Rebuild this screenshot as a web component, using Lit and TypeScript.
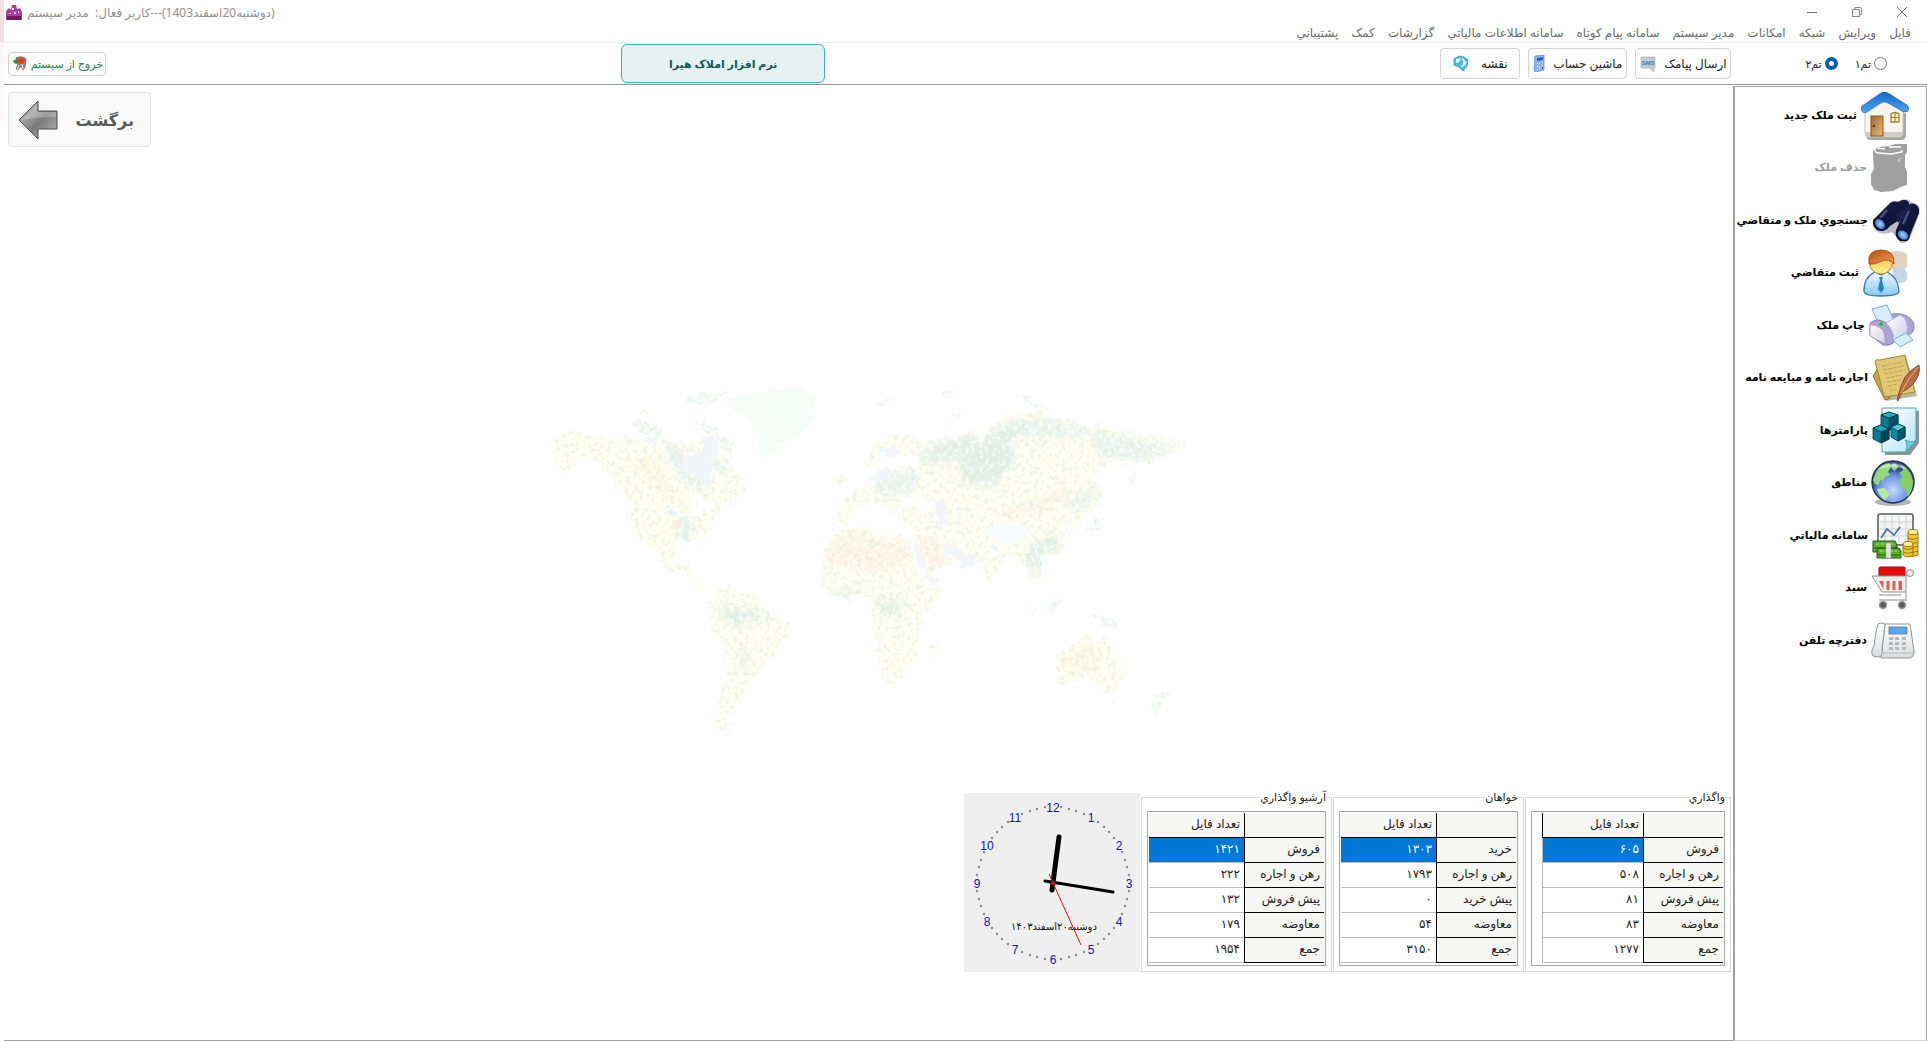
import { LitElement, html, svg, css } from "lit";
import { customElement, property, state } from "lit/decorators.js";
import { classMap } from "lit/directives/class-map.js";

const art = (w: number, h: number, body: unknown) =>
  html`<svg width=${w} height=${h} viewBox="0 0 ${w} ${h}" aria-hidden="true">${body}</svg>`;

const house = art(48, 48, svg`
  <defs>
    <linearGradient id="roof" x1="0" y1="0" x2="0" y2="1"><stop offset="0" stop-color="#1668c8"/><stop offset="1" stop-color="#4aa6f4"/></linearGradient>
    <linearGradient id="door" x1="0" y1="0" x2="1" y2="1"><stop offset="0" stop-color="#a5682c"/><stop offset="1" stop-color="#e6b878"/></linearGradient>
  </defs>
  <path d="M6 24 L24 8 L45 22 V43 Q45 48 40 48 H10 Q5 48 5 43Z" fill="#8f8f8c" opacity=".8"/>
  <path d="M4 20 L24 5 L42 20 V41 Q42 45 39 45 H7 Q4 45 4 41Z" fill="#f6f5ef" stroke="#c4c2ba"/>
  <path d="M4 40 H42 V42 Q41 45 38 45 H7 Q4 45 4 41Z" fill="#cfcdc4"/>
  <path d="M1 14 L20 1 Q23 -1 27 1 L46 13 Q49 16 47 19 Q45 21 41 19 L27 11 Q23 9 20 11 L6 20 Q2 22 1 19 Q-1 17 1 14Z" fill="url(#roof)" stroke="#1b5ca8" stroke-width=".6"/>
  <rect x="10" y="24" width="12" height="20" fill="url(#door)" stroke="#8a5520"/>
  <circle cx="13" cy="34" r="1.300" fill="#5e3a12"/>
  <path d="M30 22 Q34 19 38 22 V30 H30Z" fill="#fff6d2" stroke="#ae8233" stroke-width="1.400"/>
  <path d="M34 21V30M30 25.500H38" stroke="#ae8233" stroke-width="1.200"/>`);

const bin = art(38, 48, svg`
  <path d="M2 6 L8 3 L18 2 L24 0 L36 0 V8 L34 11 L34 23 L36 28 V41 L30 43 L22 47 L10 48 L3 46 L0 40 V30 L3 25 L2 14Z" fill="#a0a0a0"/>
  <path d="M4 4 Q3 9 8 9 L20 10 L31 8 V6 M6 4 L14 5 M18 3H30" fill="none" stroke="#fff" stroke-width="1.400"/>
  <path d="M28 15v3M30 14v1" stroke="#fff"/>`);

const binoculars = art(48, 44, svg`
  <defs><linearGradient id="bn" x1="0" y1="0" x2="1" y2="1"><stop offset="0" stop-color="#3b4584"/><stop offset=".35" stop-color="#141a45"/><stop offset="1" stop-color="#080b26"/></linearGradient>
  <radialGradient id="lens"><stop offset="0" stop-color="#a9dcff"/><stop offset="1" stop-color="#2468cf"/></radialGradient></defs>
  <path d="M4 24 L20 5 Q24 1 29 3 L32 1 Q37 -1 39 3 L46 6 Q49 10 47 16 L39 37 Q35 45 29 44 L20 33 Q12 37 4 32Z" fill="#9c9ca4" opacity=".7"/>
  <path d="M1 21 L18 4 Q21 1 26 3 L30 1 Q35 0 37 4 L38 14 L18 27 Q13 34 5 31 Q0 28 1 21Z" fill="url(#bn)"/>
  <path d="M24 31 L34 9 Q38 3 43 5 Q48 8 47 14 L38 36 Q34 43 28 42 Q22 38 24 31Z" fill="url(#bn)"/>
  <path d="M24 15 L36 8 L36 16 L26 24Z" fill="#1a2152"/>
  <path d="M15 11L8 19M37 12L31 25" stroke="#66719f" stroke-width="2" opacity=".7"/>
  <ellipse cx="8" cy="25" rx="5" ry="6.500" transform="rotate(-42 8 25)" fill="url(#lens)" stroke="#0b0e2a" stroke-width="1.500"/>
  <ellipse cx="31" cy="36" rx="5" ry="6.500" transform="rotate(-52 31 36)" fill="url(#lens)" stroke="#0b0e2a" stroke-width="1.500"/>`);

const person = art(46, 48, svg`
  <defs><linearGradient id="suit" x1="0" y1="0" x2="0" y2="1"><stop offset="0" stop-color="#f2fbff"/><stop offset="1" stop-color="#86c8f0"/></linearGradient>
  <linearGradient id="hair" x1="0" y1="0" x2="1" y2="1"><stop offset="0" stop-color="#b84a0c"/><stop offset="1" stop-color="#f2a05a"/></linearGradient>
  <linearGradient id="face" x1="0" y1="0" x2="0" y2="1"><stop offset="0" stop-color="#ffbe3c"/><stop offset="1" stop-color="#ffef9c"/></linearGradient></defs>
  <path d="M26 3 Q38 0 44 5 V18 Q40 19 44 24 V30 Q40 36 32 33Z" fill="#e2d2c0"/>
  <path d="M30 20 Q40 16 44 24 V30 Q40 36 32 33Z" fill="#c3d6e4"/>
  <path d="M1 42 Q1 28 12 23 L18 26 L24 23 Q35 28 36 42 Q36 47 18 47 Q1 47 1 42Z" fill="url(#suit)" stroke="#3577ac" stroke-width="1.300"/>
  <path d="M16 28 L20 28 L19 31 L21 40 L18 44 L15 40 L17 31Z" fill="#2d82c4"/>
  <ellipse cx="18" cy="14" rx="11.500" ry="11" fill="url(#face)" stroke="#d07a1c"/>
  <path d="M6 15 Q4 1 18 1 Q32 1 31 15 Q25 9 19 12 Q12 16 6 15Z" fill="url(#hair)" stroke="#a0430c" stroke-width=".8"/>`);

const printer = art(46, 44, svg`
  <defs><linearGradient id="pr" x1="0" y1="0" x2="1" y2="1"><stop offset="0" stop-color="#fff"/><stop offset="1" stop-color="#cfcdea"/></linearGradient></defs>
  <path d="M18 12 Q28 7 38 12 Q46 17 45 24 Q44 31 37 31 L20 26Z" fill="#a9a4d2" stroke="#8d88bd"/>
  <path d="M3 5 L18 1 L25 17 L10 21Z" fill="#d9edff" stroke="#74aee6"/>
  <path d="M1 19 Q8 13 17 19 Q25 25 25 38 Q21 42 14 41 L1 31Z" fill="#aaa5d0" stroke="#837db4"/>
  <path d="M1 21 Q6 20 13 25 Q17 30 16 40 L1 32Z" fill="url(#pr)" stroke="#9a95c5" stroke-width=".8"/>
  <path d="M17 19 L31 11 Q40 15 38 30 L25 36 Q24 25 17 19Z" fill="url(#pr)" stroke="#bab7dc"/>
  <path d="M24 36 L37 29 L44 36 L31 43Z" fill="#d6efff" stroke="#6fb4e8"/>
  <circle cx="12" cy="20" r="2" fill="#35b34a"/>`);

const scroll = art(48, 48, svg`
  <path d="M3 8 L34 2 L45 42 L14 47 Z" fill="#8c8458" opacity=".6"/>
  <path d="M1 22 L10 8 L18 44 L13 46Z" fill="#c9a73c" stroke="#8d7426"/>
  <path d="M3 7 Q4 5 8 6 L33 1 Q34 10 38 20 L43 38 Q28 41 12 43 Q8 26 3 7Z" fill="#dfc773" stroke="#a48838"/>
  <path d="M10 12L31 8M11 16L32 12M12 20L33 16M14 24L30 21M15 28L29 26M16 32L26 30M17 36H24" stroke="#c0a24c" stroke-width="1" stroke-dasharray="4 1"/>
  <path d="M47 11 Q49 20 42 29 Q36 36 30 38 L26 47 L25 46 Q28 32 33 23 Q39 15 47 11Z" fill="#b76a45" stroke="#7c412a" stroke-width=".8"/>
  <path d="M46 13 Q36 24 29 39" fill="none" stroke="#e6b295"/>`);

const cubes = art(48, 48, svg`
  <defs><linearGradient id="pg" x1="0" y1="0" x2="1" y2="1"><stop offset="0" stop-color="#fff"/><stop offset="1" stop-color="#b4e6f6"/></linearGradient></defs>
  <path d="M13 4 H47 V36 L38 48 H13Z" fill="#8d9498"/>
  <path d="M10 1 H44 V34 L34 45 H10Z" fill="url(#pg)" stroke="#4aa0bc"/>
  <path d="M44 34 L34 45 Q36 36 33 33 Q38 36 44 34Z" fill="#6cc9e4" stroke="#2d93b4" stroke-width=".7"/>
  <g stroke="#04363f" stroke-width=".8">
    <path d="M9 8 L17 5 L26 8 V19 L17 23 L9 19Z" fill="#067c94"/><path d="M9 8 L17 5 L26 8 L17 11Z" fill="#24aec8"/><path d="M17 11V23L26 19V8Z" fill="#045468"/>
    <path d="M1 21 L9 18 L17 22 V32 L9 36 L1 32Z" fill="#067c94"/><path d="M1 21 L9 18 L17 22 L9 25Z" fill="#1fa4bf"/><path d="M9 25V36L17 32V22Z" fill="#034557"/>
    <path d="M19 20 L26 17 L33 20 V30 L26 34 L19 30Z" fill="#0890aa"/><path d="M19 20 L26 17 L33 20 L26 24Z" fill="#4ccde2"/><path d="M26 24V34L33 30V20Z" fill="#045a6e"/>
  </g>`);

const globe = art(44, 46, svg`
  <defs><radialGradient id="sea" cx=".5" cy=".7"><stop offset="0" stop-color="#c6dcff"/><stop offset=".7" stop-color="#6f93e4"/><stop offset="1" stop-color="#3a4a9c"/></radialGradient></defs>
  <ellipse cx="22" cy="42" rx="18" ry="4" fill="#b4b4b8"/>
  <circle cx="22" cy="22" r="21" fill="url(#sea)" stroke="#22344e" stroke-width="1.400"/>
  <path d="M5 12 Q9 4 18 3 L20 7 L17 12 L19 15 L14 17 L12 21 L9 20 L8 25 L4 24 L2 20Z" fill="#93d87c"/>
  <path d="M20 5 L24 3 L27 7 L24 11 L21 9Z" fill="#93d87c"/>
  <path d="M29 4 Q40 9 42 21 Q42 30 37 37 L35 30 L30 27 L28 20 L31 17 L28 13 L32 10Z" fill="#84d064"/>
  <path d="M6 29 L13 28 L19 34 L14 40 Q8 36 6 29Z" fill="#b6eaa2"/>
  <path d="M8 9 Q22 -2 36 9 Q22 5 8 9Z" fill="#fff" opacity=".5"/>`);

const finance = art(48, 46, svg`
  <rect x="6" y="1" width="35" height="31" rx="2" fill="#f5f5f5" stroke="#55585a" stroke-width="1.500"/>
  <path d="M13 3V30M20 3V30M27 3V30M34 3V30M8 9H39M8 16H39M8 23H39" stroke="#d0d3d4"/>
  <path d="M9 25 L15 16 L22 22 L28 14" fill="none" stroke="#3c6da8" stroke-width="1.600"/>
  <g fill="#59b02c" stroke="#1f5c0e"><path d="M1 28 H23 L25 32 V39 H1Z"/><path d="M5 35 H27 L29 38 V45 H5Z"/></g>
  <path d="M1 35H25M5 42H28" stroke="#1f5c0e"/>
  <path d="M4 31H21M8 38H25" stroke="#b8e68c" stroke-dasharray="3 2"/>
  <rect x="14" y="30" width="5" height="15" fill="#e4e4dc" stroke="#9a9a92" stroke-width=".6"/>
  <g fill="#edc437" stroke="#93700c" stroke-width=".9">
    <path d="M36 20V42Q41 45 46 42V20Z"/><ellipse cx="41" cy="19" rx="5" ry="2.500" fill="#fff0a0"/>
    <path d="M36 25Q41 28 46 25M36 29Q41 32 46 29M36 33Q41 36 46 33M36 38Q41 41 46 38" fill="none"/>
    <path d="M31 31V42Q36 46 41 42V31Z"/><ellipse cx="36" cy="31" rx="5" ry="2.500" fill="#fff0a0"/>
    <path d="M31 35Q36 38 41 35M31 39Q36 42 41 39" fill="none"/>
  </g>`);

const cart = art(44, 44, svg`
  <rect x="8" y="1" width="26" height="12" rx="1" fill="#e80c0c" stroke="#a80808"/>
  <path d="M1 10 H35 V26 H11 Z" fill="#ececec" stroke="#8f8f8f"/>
  <path d="M8 15 H31 V24 H13Z" fill="#e2604a"/>
  <path d="M14 14V25M20 14V25M26 14V25" stroke="#f4f4f4" stroke-width="3"/>
  <path d="M35 10 L37 8 L40 7" fill="none" stroke="#a2a2a2" stroke-width="2"/>
  <path d="M35 10V34H8M8 29H30" fill="none" stroke="#c4c4c4" stroke-width="2"/>
  <circle cx="39" cy="7" r="3.500" fill="#e9e9e9" stroke="#909090"/>
  <circle cx="12" cy="39" r="3.500" fill="#5a5a5a" stroke="#9b9b9b" stroke-width="1.500"/>
  <circle cx="31" cy="39" r="3.500" fill="#5a5a5a" stroke="#9b9b9b" stroke-width="1.500"/>`);

const phone = art(44, 38, svg`
  <defs><linearGradient id="ph" x1="0" y1="0" x2="0" y2="1"><stop offset="0" stop-color="#fff"/><stop offset="1" stop-color="#d9dcde"/></linearGradient></defs>
  <path d="M14 2 H39 L43 29 Q43 36 38 36 H10Z" fill="url(#ph)" stroke="#8f9498"/>
  <path d="M7 2 Q9 0 14 2 Q13 12 11 27 Q12 35 8 35 L2 34 Q-1 30 3 24 Q4 12 7 2Z" fill="url(#ph)" stroke="#8f9498"/>
  <path d="M11 31 H42" stroke="#b9bdc0"/>
  <rect x="18" y="5" width="18" height="7" fill="#5aa6ec" stroke="#5a7a9c" stroke-width=".8"/>
  <g fill="#b3b8bc"><path d="M18 15h4v3h-4zM24 15h4v3h-4zM31 15h4v3h-4zM18 20h4v3h-4zM24 20h4v3h-4zM31 20h4v3h-4zM18 25h4v3h-4zM24 25h4v3h-4zM31 25h4v3h-4z"/></g>`);

const appIcon = art(16, 15, svg`
  <path d="M0 6 L3 3 L5 5 L6 0 H10 L11 4 L14 3 L16 7 V15 H0Z" fill="#b03aa4"/>
  <path d="M1 11H15V15H1Z" fill="#74186c"/>
  <path d="M6 3h2v2H6zM8 7h2v2H8zM3 8h2v1H3zM12 6h1v2h-1z" fill="#ffe9c0"/>`);

const exitIcon = art(14, 15, svg`
  <path d="M3 2 Q9 -1 13 3 L12 11 L10 14 L8 10 L5 14 L3 13 L5 8Z" fill="#8d8d90" stroke="#5c5c60" stroke-width=".7"/>
  <ellipse cx="8" cy="5" rx="4" ry="3" fill="#e2401c"/>
  <path d="M0 5 Q3 2 5 4 L4 8 Q1 8 0 5Z" fill="#2c8a3a"/>
  <path d="M4 14L6 9M10 13L9 8" stroke="#f2f2f2"/>`);

const backIcon = art(40, 40, svg`
  <defs><linearGradient id="ar" x1="0" y1="0" x2="1" y2="1"><stop offset="0" stop-color="#d4d4d4"/><stop offset=".55" stop-color="#7a7a7a"/><stop offset="1" stop-color="#bdbdbd"/></linearGradient></defs>
  <path d="M1 20 L20 1 V11 H39 V29 H20 V39Z" fill="url(#ar)" stroke="#4a4a4a"/>
  <path d="M4 20 L19 5 V12 H38 V17 Q20 17 4 20Z" fill="#fff" opacity=".25"/>`);

const smsIcon = art(16, 16, svg`
  <path d="M1 1H15V12H13L14 16L9 12H1Z" fill="#c3c8cb" stroke="#a7adb1" stroke-width=".6"/>
  <text x="8" y="9" text-anchor="middle" direction="ltr" font-family="Liberation Sans, sans-serif" font-weight="700" font-size="6" fill="#2a86b8">SMS</text>`);

const calcIcon = art(12, 17, svg`
  <path d="M2 1 L11 0 V15 L3 17 L1 16Z" fill="#8db4ee" stroke="#5a86cd" stroke-width=".7"/>
  <path d="M4 3L10 2V5L4 6Z" fill="#2f62b8"/>
  <path d="M4 8h1v1H4zM6 8h1v1H6zM9 7h1v1H9zM4 11h1v1H4zM6 11h1v1H6zM9 10h1v1H9zM4 14h1v1H4zM6 13h1v1H6z" fill="#fff"/>
  <path d="M9 12h1v2H9z" fill="#2f62b8"/>`);

const mapIcon = art(16, 17, svg`
  <path d="M1 4 L6 1 L11 2 L15 5 L14 11 L10 16 L6 12 L1 10Z" fill="#49bfe2" stroke="#2587ac" stroke-width=".7"/>
  <path d="M3 4 L8 3 L6 7 L3 8Z" fill="#e8faff"/>
  <path d="M9 4 Q12 5 11 9 L9 12" fill="none" stroke="#fff" stroke-width="1.600"/>
  <path d="M12 6 L14 7 L12 12Z" fill="#bcebf8"/>`);

const worldMap = html`<svg class="map" viewBox="546 387 640 354" aria-hidden="true">
  <defs>
    <filter id="coast" x="-5%" y="-5%" width="110%" height="110%" color-interpolation-filters="sRGB">
      <feTurbulence type="fractalNoise" baseFrequency=".12" numOctaves="4" seed="4" result="n"/>
      <feDisplacementMap in="SourceGraphic" in2="n" scale="14" xChannelSelector="R" yChannelSelector="G" result="d"/>
      <feTurbulence type="fractalNoise" baseFrequency=".22" numOctaves="3" seed="9" result="m"/>
      <feColorMatrix in="m" type="matrix" values="0 0 0 0 .84  0 0 0 0 .92  0 0 0 0 .86  0 6 0 0 -3" result="s"/>
      <feComposite in="s" in2="d" operator="in" result="t"/>
      <feComponentTransfer in="t" result="u"><feFuncA type="linear" slope=".45"/></feComponentTransfer>
      <feColorMatrix in="m" type="matrix" values="0 0 0 0 1  0 0 0 0 1  0 0 0 0 1  7 0 0 0 -3.800" result="w"/>
      <feComponentTransfer in="w" result="x"><feFuncA type="linear" slope=".7"/></feComponentTransfer>
      <feMerge><feMergeNode in="d"/><feMergeNode in="u"/><feMergeNode in="x"/></feMerge>
    </filter>
    <filter id="edge" x="-5%" y="-5%" width="110%" height="110%" color-interpolation-filters="sRGB">
      <feTurbulence type="fractalNoise" baseFrequency=".12" numOctaves="4" seed="4" result="n"/>
      <feDisplacementMap in="SourceGraphic" in2="n" scale="10" xChannelSelector="R" yChannelSelector="G"/>
    </filter>
    <filter id="melt" x="-10%" y="-10%" width="120%" height="120%" color-interpolation-filters="sRGB"><feGaussianBlur stdDeviation="9"/></filter>
  </defs>
  <g filter="url(#coast)">
    <g transform="translate(530 370) scale(.3333)" fill="#fffdee">
      <path d="M60 205 L110 188 L220 200 L300 205 L380 215 L450 225 L500 205 L550 205 L545 260 L590 285 L620 320 L655 355 L600 400 L560 420 L545 460 L515 490 L515 535 L495 515 L430 520 L425 580 L470 585 L470 605 L500 650 L525 665 L490 660 L440 608 L395 600 L375 555 L335 515 L290 465 L285 395 L250 340 L205 285 L150 255 L90 325 L65 270Z"/>
      <path d="M545 665 L575 650 L670 690 L690 722 L765 770 L735 855 L680 900 L655 950 L625 985 L590 1040 L595 1090 L555 1085 L560 980 L580 920 L580 840 L540 790 L525 740Z"/>
      <path d="M290 155 L320 155 L390 185 L385 210 L335 195Z" fill="#eff8f1"/>
      <path d="M450 100 L480 80 L530 70 L590 68 L540 95 L470 105ZM480 160 L520 165 L600 215 L605 255 L570 245 L550 200ZM310 125 L350 135 L330 140Z" fill="#f4faf5"/>
      <g filter="url(#melt)">
        <path d="M400 225 L450 235 L450 290 L520 350 L530 375 L460 340 L410 280Z" fill="#e6f3ea"/>
        <path d="M535 265 L590 290 L580 310 L540 290ZM560 400 L610 395 L600 408Z" fill="#e6f3ea"/>
        <path d="M455 440 L485 460 L470 515 L430 515Z" fill="#e6f3ea"/>
        <path d="M300 270 L350 260 L400 330 L440 390 L430 410 L310 310Z" fill="#fff8e0"/>
        <path d="M565 705 L620 725 L715 735 L640 755 L595 775Z" fill="#e0f0e5"/>
        <path d="M630 830 L650 850 L640 930 L625 870Z" fill="#e6f3ea"/>
      </g>
    </g>
    <g transform="translate(800 370) scale(.3333)" fill="#fffdee">
      <path d="M175 290 L225 215 L270 190 L350 215 L400 215 L480 205 L510 170 L525 215 L560 185 L620 140 L700 130 L830 165 L900 175 L980 190 L1060 205 L1150 220 L1140 240 L1090 240 L1060 270 L985 285 L905 285 L870 320 L895 360 L885 410 L835 435 L835 475 L800 455 L790 470 L790 530 L755 560 L705 560 L720 640 L690 620 L650 575 L620 560 L580 600 L560 655 L540 600 L525 565 L450 545 L405 515 L455 580 L380 625 L335 530 L325 470 L290 465 L300 420 L330 400 L395 430 L350 380 L300 395 L270 440 L215 400 L150 410 L145 440 L130 465 L95 465 L95 425 L140 420 L130 380 L205 345 L290 295 L350 285 L330 245 L290 260 L230 245 L225 290 L190 300Z"/>
      <path d="M85 510 L110 480 L190 475 L220 500 L310 510 L340 590 L370 650 L412 655 L400 690 L355 740 L355 805 L325 880 L300 930 L250 945 L220 870 L215 760 L195 690 L160 680 L85 682 L55 640 L55 560Z"/>
      <path d="M758 855 L800 835 L850 798 L880 825 L905 795 L930 845 L968 900 L945 970 L905 965 L860 925 L765 945Z"/>
      <path d="M385 830 L405 810 L395 885 L385 870ZM92 335 L110 305 L145 355 L100 350Z"/>
      <path d="M635 68 L660 75 L740 125 L700 125ZM975 340 L1010 285 L985 350ZM840 492 L900 440 L895 470ZM665 685 L710 745 L685 720ZM730 710 L770 685 L760 740ZM865 730 L940 760 L940 780 L890 765ZM1085 965 L1100 975 L1050 1035 L1045 1015ZM925 995 L938 1000 L932 1010ZM415 72 L470 62 L430 80ZM205 100 L290 90 L230 110ZM430 175 L450 135 L500 125 L455 145Z" fill="#f4faf3"/>
      <g fill="#e3f1e8" filter="url(#melt)">
        <path d="M345 260 L420 215 L480 210 L520 195 L530 225 L620 155 L700 145 L800 170 L620 210 L640 270 L590 330 L560 355 L480 340 L465 260 L390 290Z"/>
        <path d="M620 150 L820 165 L850 200 L700 210Z" fill="#eaf5ee"/>
        <path d="M840 185 L1060 220 L1120 235 L1060 260 L985 275 L900 265Z" fill="#eaf5ee"/>
        <path d="M205 340 L290 300 L350 310 L330 370 L240 380ZM790 400 L880 355 L870 400 L830 430Z" fill="#eaf5ee"/>
        <path d="M660 560 L740 490 L780 530 L705 560 L710 630ZM225 690 L300 690 L290 740 L230 735ZM95 665 L180 665 L140 682 L95 680Z"/>
      </g>
      <g fill="#fff3e4" filter="url(#melt)">
        <path d="M70 570 L115 495 L190 490 L305 520 L320 580 L200 595 L90 585Z"/>
        <path d="M340 490 L400 520 L445 570 L385 605 L350 540Z"/>
        <path d="M570 445 L700 395 L800 350 L780 390 L700 430 L580 450Z"/>
        <path d="M780 870 L850 835 L885 860 L875 905 L790 905Z" fill="#fff6e4"/>
      </g>
    </g>
  </g>
  <g filter="url(#edge)">
    <g transform="translate(530 370) scale(.3333)">
      <path d="M585 90 L690 65 L800 55 L840 75 L835 150 L800 200 L735 230 L700 270 L680 250 L685 200 L650 145 L600 120Z" fill="#f5fbf7"/>
      <path d="M510 195 L555 210 L540 265 L530 355 L515 350 L505 325 L450 305 L445 265 L510 250ZM335 205 L370 205 L365 220 L335 218Z" fill="#f2f5fc"/>
      <path d="M480 375 L545 405 L525 430 L475 430ZM290 230 L320 230 L315 245 L295 245ZM405 330 L435 345 L425 360Z" fill="#fff"/>
      <path d="M410 420h14v14h-14z" fill="#e0f6fb"/>
      <path d="M420 462l20-8 12 10-20 8z" fill="#f9f0e4"/>
    </g>
    <g transform="translate(800 370) scale(.3333)">
      <path d="M325 525 L340 530 L380 620 L415 630 L410 645 L370 635ZM405 515 L525 565 L520 585 L480 600 L450 560ZM395 395 L425 395 L430 465 L405 465ZM240 240 L290 235 L290 262 L250 262ZM190 325 L255 290 L255 330ZM720 140 L800 155 L740 158Z" fill="#f3f5fb"/>
      <path d="M535 480 L600 465 L680 470 L680 500 L620 525 L560 510ZM720 575l20 5-10 22z" fill="#f6fbfd"/>
      <path d="M560 520 L600 530 L580 550 L565 580ZM370 415l20-5-20-10z" fill="#fff"/>
      <path d="M572 528h12v12h-12zM228 240h10v14h-10z" fill="#e0f6fb"/>
    </g>
  </g>
</svg>`;

interface Group { title: string; wide: boolean; rows: [string, string][]; }

const GROUPS: Group[] = [
  { title: "واگذاري", wide: true, rows: [["فروش", "۶۰۵"], ["رهن و اجاره", "۵۰۸"], ["پیش فروش", "۸۱"], ["معاوضه", "۸۳"], ["جمع", "۱۲۷۷"]] },
  { title: "خواهان", wide: false, rows: [["خرید", "۱۳۰۳"], ["رهن و اجاره", "۱۷۹۳"], ["پیش خرید", "۰"], ["معاوضه", "۵۴"], ["جمع", "۳۱۵۰"]] },
  { title: "آرشیو واگذاري", wide: false, rows: [["فروش", "۱۴۲۱"], ["رهن و اجاره", "۲۲۲"], ["پیش فروش", "۱۳۲"], ["معاوضه", "۱۷۹"], ["جمع", "۱۹۵۴"]] },
];

const MENU = ["فایل", "ویرایش", "شبکه", "امکانات", "مدیر سیستم", "سامانه پیام کوتاه", "سامانه اطلاعات مالیاتي", "گزارشات", "کمک", "پشتیباني"];

const NAV: { label: string; icon: unknown; inset: string; disabled?: boolean }[] = [
  { label: "ثبت ملک جدید", icon: house, inset: "far" },
  { label: "حذف ملک", icon: bin, inset: "far", disabled: true },
  { label: "جستجوي ملک و متقاضي", icon: binoculars, inset: "near" },
  { label: "ثبت متقاضي", icon: person, inset: "far" },
  { label: "چاپ ملک", icon: printer, inset: "mid" },
  { label: "اجاره نامه و مبایعه نامه", icon: scroll, inset: "near" },
  { label: "پارامترها", icon: cubes, inset: "near" },
  { label: "مناطق", icon: globe, inset: "mid" },
  { label: "سامانه مالیاتي", icon: finance, inset: "near" },
  { label: "سبد", icon: cart, inset: "mid" },
  { label: "دفترچه تلفن", icon: phone, inset: "mid" },
];

@customElement("analog-clock")
class AnalogClock extends LitElement {
  static styles = css`
    :host { display: block; background: #efefef; }
    svg { display: block; }
    .num { font: 12px "Liberation Sans", sans-serif; fill: #1414b4; text-anchor: middle; }
    .date { font: 10px "DejaVu Sans", sans-serif; fill: #111; text-anchor: middle; direction: rtl; }
  `;
  render() {
    const cx = 89, cy = 90, r = 76;
    const at = (i: number) => {
      const a = (i * Math.PI) / 30;
      return [Math.round(cx + r * Math.sin(a)), Math.round(cy - r * Math.cos(a))];
    };
    const marks = Array.from({ length: 60 }, (_, i) => {
      const [x, y] = at(i);
      return i % 5
        ? svg`<circle cx=${x} cy=${y} r="1.200" fill="#8a8a8a"/>`
        : svg`<text class="num" x=${x} y=${y + 5}>${i / 5 || 12}</text>`;
    });
    return html`<svg width="176" height="179" viewBox="0 0 176 179" role="img">
      ${marks}
      <text class="date" x="90" y="137">دوشنبه۲۰اسفند۱۴۰۳</text>
      <path d="M88 97 L95 44" stroke="#000" stroke-width="5" stroke-linecap="round"/>
      <path d="M81 88 L149 99" stroke="#000" stroke-width="3" stroke-linecap="round"/>
      <path d="M85 81 L117 152" stroke="#e01010"/>
      <circle cx="89" cy="90" r="2" fill="#e01010"/>
    </svg>`;
  }
}

@customElement("stat-group")
class StatGroup extends LitElement {
  @property({ attribute: false }) data!: Group;
  static styles = css`
    :host { display: block; }
    fieldset { margin: 0; padding: 6px 5px 5px; border: 1px solid #dadada; min-width: 0; background: #fff; }
    legend { padding: 0; height: 16px; line-height: 16px; font-size: 11px; color: #222; }
    .frame { border: 1px solid #a6a6a6; padding: 1px 1px 2px; }
    .wide { padding-left: 10px; }
    table { border-collapse: separate; border-spacing: 0; font-size: 12px; color: #222; }
    th, td { box-sizing: border-box; height: 25px; padding: 0 4px 2px; font-weight: 400; text-align: right; white-space: nowrap; line-height: 16px; }
    th { background: #f6f6f2; border-bottom: 1px solid #000; }
    .label { width: 80px; border-left: 1px solid #000; }
    .value { width: 95px; }
    .wide .value { width: 101px; border-left: 1px solid #b8b8b8; }
    .wide th.value { border-left-color: #000; }
    td { border-bottom: 1px solid #bdbdbd; }
    .active td { background: #0078d7; color: #fff; }
  `;
  render() {
    const g = this.data;
    return html`<fieldset>
      <legend>${g.title}</legend>
      <div class=${classMap({ frame: true, wide: g.wide })}>
        <table>
          <thead><tr><th class="label"></th><th class="value" scope="col">تعداد فایل</th></tr></thead>
          <tbody>${g.rows.map(([k, v], i) => html`<tr class=${classMap({ active: i === 0 })}>
            <th class="label" scope="row">${k}</th><td class="value">${v}</td></tr>`)}</tbody>
        </table>
      </div>
    </fieldset>`;
  }
}

@customElement("app-root")
class AppRoot extends LitElement {
  @state() private theme = 2;

  static styles = css`
    :host { display: block; }
    * { box-sizing: border-box; }
    .window { direction: rtl; display: flex; flex-direction: column; min-height: 100vh; padding-left: 4px;
      background: linear-gradient(#f4dfe6 0 42px, #fdf4f7 42px 121px, #fff 121px) 0 0 / 4px 100% no-repeat #fff;
      font-family: "Noto Sans", "DejaVu Sans", sans-serif; font-size: 12px; color: #222; }
    button { font-family: inherit; cursor: pointer; }
    svg { flex: none; display: block; }
    .title { display: flex; justify-content: space-between; align-items: center; height: 24px; padding: 0 19px 0 2px; }
    .caption { display: flex; align-items: center; flex-direction: row-reverse; gap: 5px; color: #909090; font-size: 12px; font-weight: 400; margin: 0; white-space: pre; }
    .controls { display: flex; gap: 32px; }
    .controls button { padding: 0; border: 0; background: none; width: 13px; height: 16px; }
    .menu { display: flex; gap: 13px; height: 19px; align-items: center; padding: 0 16px; border-bottom: 1px solid #ececec; }
    .menu a { color: #6c6c6c; text-decoration: none; white-space: nowrap; line-height: 18px; }
    .toolbar { display: flex; align-items: center; height: 42px; padding: 0 40px 0 4px; border-bottom: 1px solid #969696; }
    .themes { display: flex; gap: 17px; margin-left: 74px; }
    .themes label { display: flex; align-items: center; gap: 3px; font-size: 11px; }
    .themes input { appearance: none; width: 13px; height: 13px; margin: 0; border: 1px solid #777; border-radius: 50%; background: #f6f6f6; }
    .themes input:checked { border: 4px solid #0a5cad; background: #fff; }
    .tools { display: flex; gap: 8px; }
    .tool { display: flex; align-items: center; justify-content: center; gap: 8px; height: 31px; padding: 0 6px;
      background: #fdfdfd; border: 1px solid #d2d2d2; border-radius: 4px; font-size: 12px; color: #222; white-space: nowrap; }
    .sms { width: 96px; } .calc { width: 99px; } .place { width: 80px; gap: 12px; }
    .lead { flex: 615; } .trail { flex: 515; }
    .brand { width: 204px; height: 39px; margin: 0; display: grid; place-items: center; background: #e6f2f2; border: 1px solid #3ab5b2;
      border-radius: 6px; color: #0d5a5c; font-size: 11px; font-weight: 700; }
    .exit { width: 98px; height: 24px; padding: 0 2px 0 4px; gap: 4px; color: #17884a; font-size: 11px; font-weight: 500; justify-content: space-between; }
    .body { display: flex; flex: 1; }
    .side { width: 194px; border: solid #a0a0a0; border-width: 1px 1px 1px 2px; border-bottom-color: #d4d4d4; margin-top: 1px; }
    .side ul { list-style: none; margin: 0; padding: 3px 0 0; }
    .side li:nth-child(even) { padding-bottom: 1px; }
    .side button { display: flex; align-items: center; gap: 4px; width: 100%; height: 52px; padding: 0; border: 0; background: none;
      font-size: 11px; font-weight: 700; color: #000; white-space: nowrap; }
    .side span { padding-bottom: 4px; }
    .side .near { padding-right: 6px; } .side .mid { padding-right: 11px; } .side .far { padding-right: 17px; }
    .side button:disabled { color: #a0a0a0; }
    .main { flex: 1; min-width: 0; display: grid; grid-template: 1fr / 1fr; border-bottom: 1px solid #a0a0a0; }
    .main > * { grid-area: 1 / 1; }
    .map { place-self: center; width: 37%; height: auto; }
    .back { place-self: start end; display: flex; align-items: center; justify-content: space-between; height: 55px; width: 143px; margin: 7px 4px;
      background: #f9f9f9; border: 1px solid #e4e4e4; border-radius: 4px; font-size: 16px; font-weight: 600; color: #5a5a5a; padding: 0 16px 0 9px; }
    .stats { place-self: end start; display: flex; align-items: flex-end; gap: 1px; padding: 0 2px 68px 0; }
  `;

  render() {
    return html`<div class="window">
      <header class="title">
        <div class="controls">
          <button aria-label="بستن">${art(12, 12, svg`<path d="M1 1L11 11M11 1L1 11" stroke="#777"/>`)}</button>
          <button aria-label="بازگرداندن">${art(12, 12, svg`<path d="M1.500 3.500h7v7h-7zM4 3.500V1.500H9Q10.500 1.500 10.500 3V8.500H9" fill="none" stroke="#888"/>`)}</button>
          <button aria-label="کوچک کردن">${art(12, 12, svg`<path d="M1 6.500H11" stroke="#777"/>`)}</button>
        </div>
        <h1 class="caption">${appIcon}<span>(دوشنبه20اسفند1403)---کاربر فعال:  مدیر سیستم</span></h1>
      </header>
      <nav class="menu">${MENU.map((m) => html`<a href="#">${m}</a>`)}</nav>
      <div class="toolbar">
        <div class="themes">
          ${[["تم۱", 1], ["تم۲", 2]].map(([t, n]) => html`<label><input type="radio" name="theme" .checked=${this.theme === n}
            @change=${() => (this.theme = n as number)}>${t}</label>`)}
        </div>
        <div class="tools">
          <button class="tool sms">ارسال پیامک${smsIcon}</button>
          <button class="tool calc">ماشین حساب${calcIcon}</button>
          <button class="tool place">نقشه${mapIcon}</button>
        </div>
        <div class="lead"></div>
        <h2 class="brand">نرم افزار املاک هیرا</h2>
        <div class="trail"></div>
        <button class="tool exit">خروج از سیستم${exitIcon}</button>
      </div>
      <div class="body">
        <aside class="side"><ul>
          ${NAV.map((n) => html`<li><button class=${n.inset} ?disabled=${n.disabled}>${n.icon}<span>${n.label}</span></button></li>`)}
        </ul></aside>
        <main class="main">
          ${worldMap}
          <button class="back">برگشت${backIcon}</button>
          <div class="stats">
            ${GROUPS.map((g) => html`<stat-group .data=${g}></stat-group>`)}
            <analog-clock></analog-clock>
          </div>
        </main>
      </div>
    </div>`;
  }
}
